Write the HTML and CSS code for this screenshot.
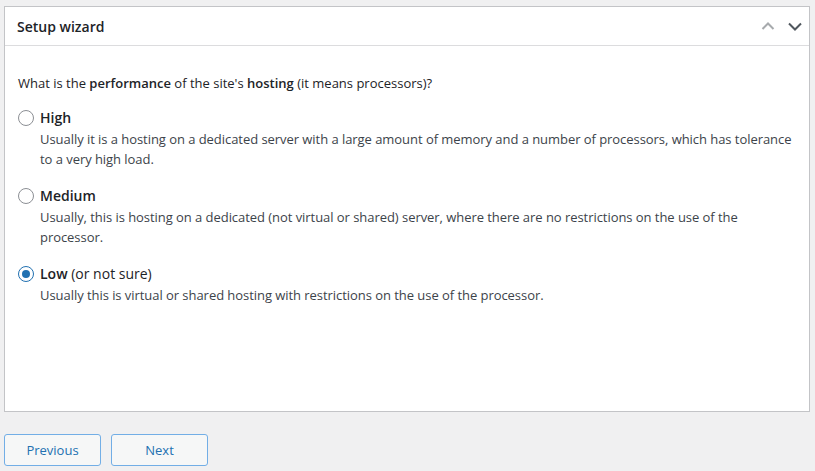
FILE: index.html
```html
<!DOCTYPE html>
<html>
<head>
<meta charset="utf-8">
<link rel="stylesheet" href="styles.css">
</head>
<body>
<div class="page">
  <div class="card">
    <div class="card-header">
      <h2 class="card-title">Setup wizard</h2>
      <div class="card-actions">
        <svg class="chev chev-up" width="20" height="20" viewBox="0 0 20 20"><path d="M4.5 13 L10 7.5 L15.5 13" fill="none" stroke="#a7aaad" stroke-width="2"/></svg>
        <svg class="chev chev-down" width="20" height="20" viewBox="0 0 20 20"><path d="M4 7.5 L10 13.5 L16 7.5" fill="none" stroke="#50575e" stroke-width="2"/></svg>
      </div>
    </div>
    <div class="card-body">
      <p class="question">What is the <b>performance</b> of the site's <b>hosting</b> (it means processors)?</p>
      <label class="option">
        <span class="radio"></span>
        <span class="option-text">
          <span class="option-title"><b>High</b></span>
          <span class="option-desc">Usually it is a hosting on a dedicated server with a large amount of memory and a number of processors, which has tolerance to a very high load.</span>
        </span>
      </label>
      <label class="option">
        <span class="radio"></span>
        <span class="option-text">
          <span class="option-title"><b>Medium</b></span>
          <span class="option-desc">Usually, this is hosting on a dedicated (not virtual or shared) server, where there are no restrictions on the use of the processor.</span>
        </span>
      </label>
      <label class="option">
        <span class="radio checked"></span>
        <span class="option-text">
          <span class="option-title"><b>Low</b> (or not sure)</span>
          <span class="option-desc">Usually this is virtual or shared hosting with restrictions on the use of the processor.</span>
        </span>
      </label>
    </div>
  </div>
  <div class="nav">
    <button class="btn">Previous</button>
    <button class="btn">Next</button>
  </div>
</div>
</body>
</html>
```

FILE: styles.css
```css
html, body {
  margin: 0;
  padding: 0;
  background: #f0f0f1;
}
body {
  font-family: "Open Sans", "Noto Sans", sans-serif;
  font-size: 13px;
  color: #1d2327;
}
b { font-weight: 600; }
.page {
  padding: 6px 5px 0 4px;
}
.card {
  background: #fff;
  border: 1px solid #c3c4c7;
  height: 406px;
  box-sizing: border-box;
}
.card-header {
  display: flex;
  align-items: center;
  justify-content: space-between;
  height: 38px;
  border-bottom: 1px solid #dcdcde;
  padding: 0 4px 0 12px;
}
.card-title {
  margin: 0;
  font-size: 14px;
  font-weight: 600;
}
.card-actions {
  display: flex;
  gap: 7px;
}
.chev { display: block; }
.card-body {
  padding: 27px 12px 0 13px;
}
.question {
  margin: 0 0 15px;
  line-height: 20px;
}
.option {
  display: flex;
  align-items: flex-start;
  margin-bottom: 17px;
  line-height: 20px;
}
.radio {
  width: 14px;
  height: 14px;
  border: 1px solid #8c8f94;
  border-radius: 50%;
  flex: none;
  margin: 2px 6px 0 0;
  position: relative;
  box-sizing: content-box;
}
.radio.checked {
  border-color: #2271b1;
}
.radio.checked::after {
  content: "";
  position: absolute;
  left: 3px;
  top: 3px;
  width: 8px;
  height: 8px;
  border-radius: 50%;
  background: #2271b1;
}
.option-text {
  display: flex;
  flex-direction: column;
}
.option-title {
  font-size: 14px;
}
.option-desc {
  color: #3c434a;
  margin-top: 1px;
  letter-spacing: -0.05px;
}
.nav {
  display: flex;
  gap: 10px;
  padding-top: 22px;
}
.btn {
  width: 97px;
  height: 32px;
  border: 1px solid #72aee6;
  border-radius: 3px;
  background: #f6f7f7;
  color: #2271b1;
  font-family: inherit;
  font-size: 13px;
}
```
